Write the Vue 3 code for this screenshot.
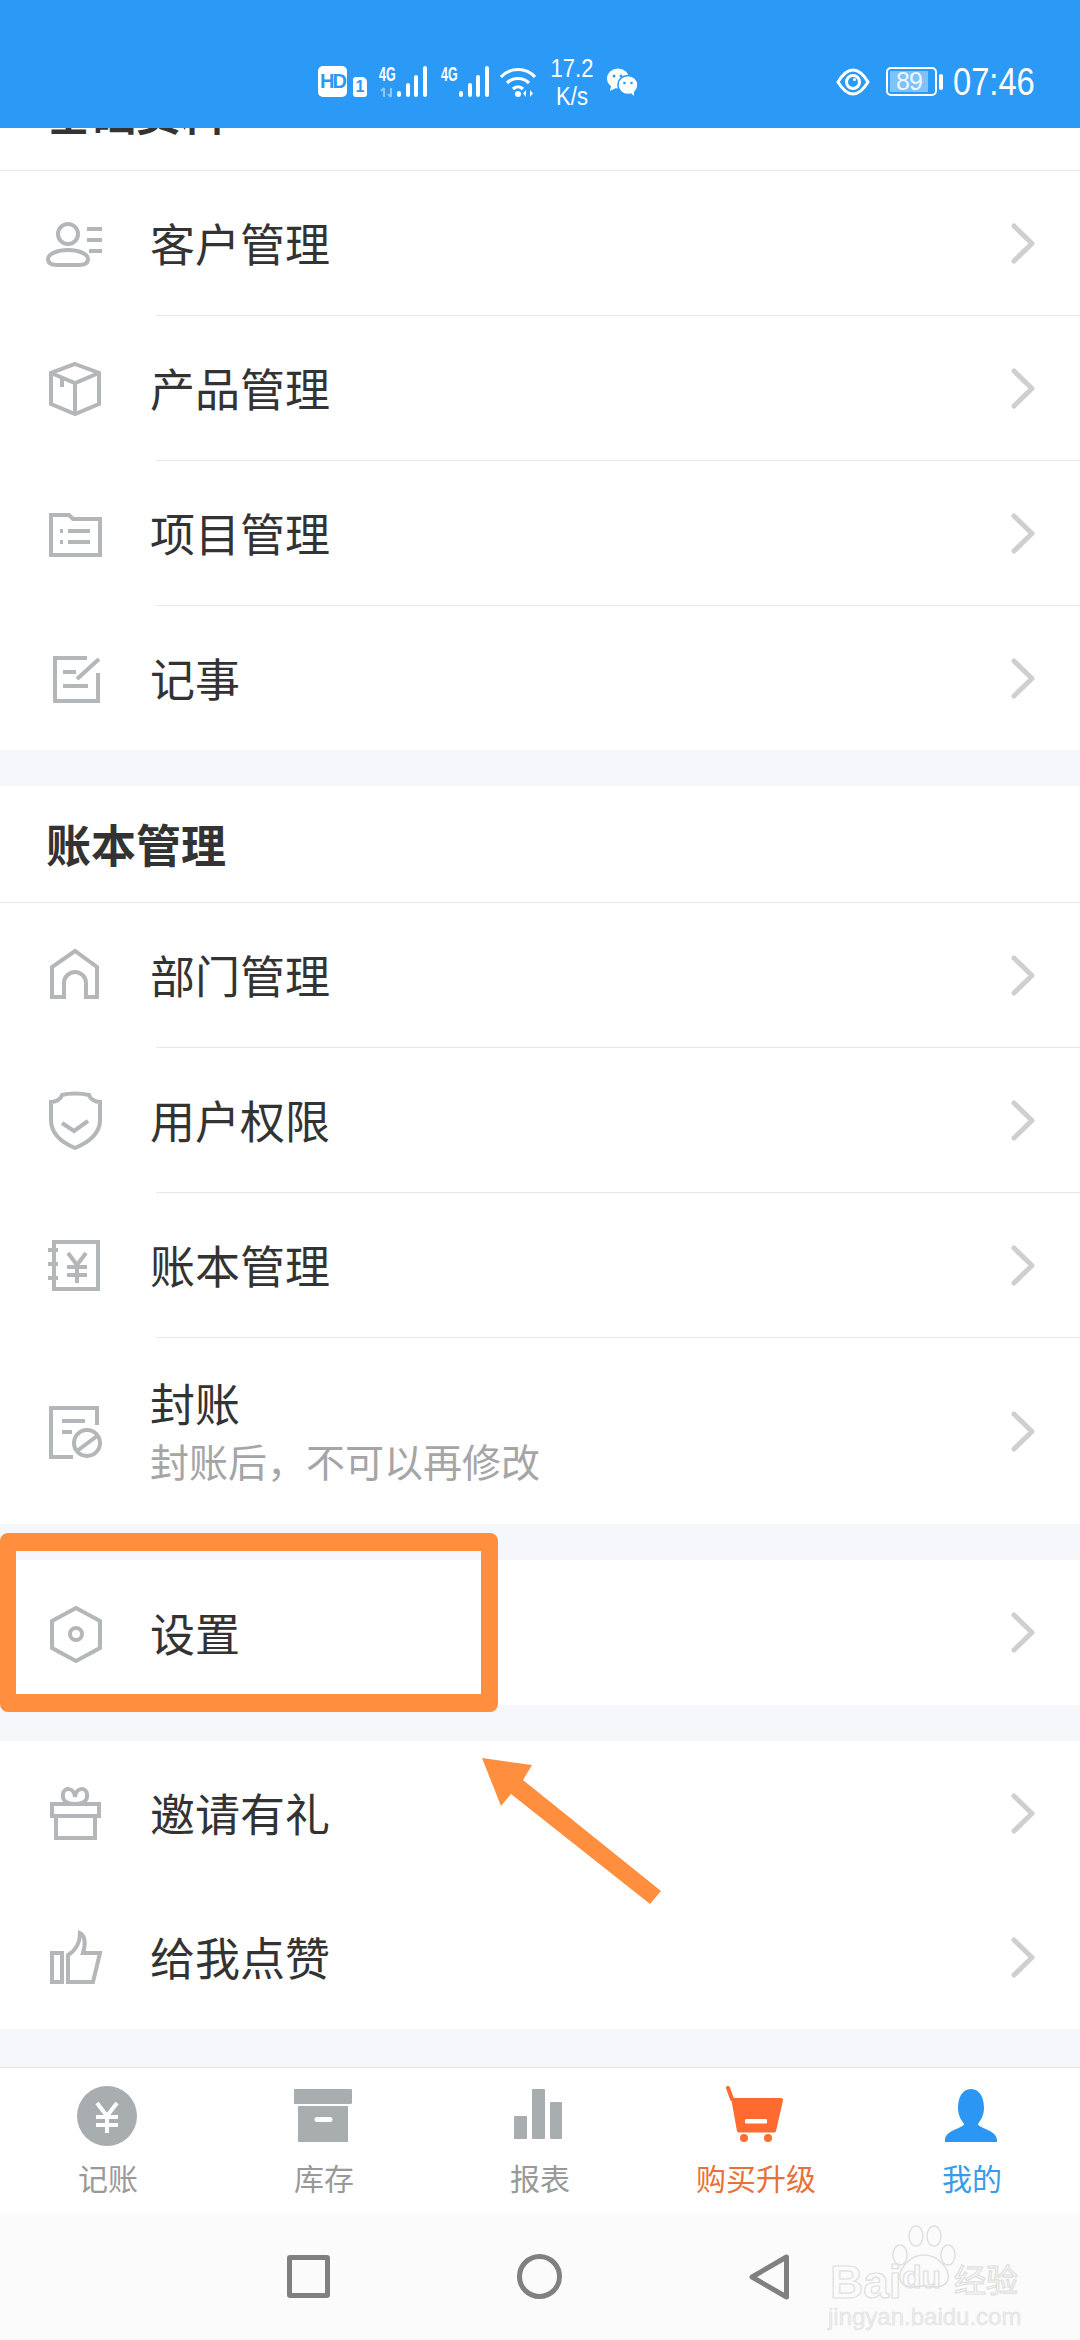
<template>
  <div class="page">
    <header class="status">
      <div class="status__left">
        <span class="status__hd">HD</span>
        <span class="status__sim">1</span>
        <div class="sig">
          <div class="sig__col">
            <span class="sig__net">4G</span>
            <svg class="sig__arrows" width="17" height="11" viewBox="0 0 17 11">
              <path d="M5 10V1M2 4l3-3M12 1v9M9 7l3 3" />
            </svg>
          </div>
          <svg class="sig__bars" width="32" height="32" viewBox="0 0 32 32">
            <path d="M3 27v2M12 19v10M20 11v18M29 2v27" />
          </svg>
        </div>
        <div class="sig sig_second">
          <div class="sig__col">
            <span class="sig__net">4G</span>
          </div>
          <svg class="sig__bars" width="32" height="32" viewBox="0 0 32 32">
            <path d="M3 27v2M12 19v10M20 11v18M29 2v27" />
          </svg>
        </div>
        <svg class="status__wifi" width="38" height="32" viewBox="0 0 38 32">
          <path d="M2 11C11 1 27 1 36 11M8 17c6-6 16-6 22 0M14 23c3-3 7-3 10 0" fill="none" stroke="#fff" stroke-width="3.2" />
          <circle cx="19" cy="28" r="3" fill="#fff" />
          <path d="M27 24v7l-3-3.500zM31 24v7l3-3.500z" fill="#fff" />
        </svg>
        <div class="status__speed">
          <span>17.2</span>
          <span>K/s</span>
        </div>
        <svg class="status__wechat" width="32" height="28" viewBox="0 0 32 28">
          <ellipse cx="12" cy="10.500" rx="11" ry="10" fill="#fff" />
          <path d="M5 18l-1 5 6-3z" fill="#fff" />
          <ellipse cx="22" cy="17" rx="10" ry="9.500" fill="#fff" stroke="#2b9af6" stroke-width="1.500" />
          <path d="M25 25l3 3v-5z" fill="#fff" />
          <circle cx="8" cy="8" r="1.500" fill="#2b9af6" />
          <circle cx="15" cy="8" r="1.500" fill="#2b9af6" />
          <circle cx="18.500" cy="15" r="1.300" fill="#2b9af6" />
          <circle cx="25.500" cy="15" r="1.300" fill="#2b9af6" />
        </svg>
      </div>
      <div class="status__right">
        <svg class="status__eye" width="34" height="28" viewBox="0 0 34 28">
          <path d="M2 14C8 4 13 2 17 2s9 2 15 12c-6 10-11 12-15 12S8 24 2 14z" fill="none" stroke="#fff" stroke-width="3" />
          <circle cx="17" cy="14" r="6.500" fill="none" stroke="#fff" stroke-width="3" />
          <circle cx="18.500" cy="11.500" r="1.500" fill="#fff" />
        </svg>
        <div class="status__battery"><span>89</span></div>
        <span class="status__cap"></span>
        <span class="status__time">07:46</span>
      </div>
    </header>

    <main class="scroll">
      <div class="scroll__inner">
        <section v-for="(group, g) in groups" :key="g" class="card">
          <h2 v-if="group.title" class="card__title">{{ group.title }}</h2>
          <template v-for="(item, i) in group.items" :key="item.label">
            <div v-if="i > 0 && !group.noLines" class="card__sep"></div>
            <div class="row" :class="item.rowClass">
              <svg class="row__icon" width="60" height="60" viewBox="0 0 60 60">
                <path :d="item.d" />
              </svg>
              <div class="row__text">
                <div class="row__label">{{ item.label }}</div>
                <div v-if="item.sub" class="row__sub">{{ item.sub }}</div>
              </div>
              <svg class="row__chevron" width="26" height="41" viewBox="0 0 26 41">
                <path d="M4 3l18 17.500L4 38" />
              </svg>
            </div>
          </template>
        </section>
      </div>
    </main>

    <nav class="tabs">
      <div class="tab">
        <svg width="80" height="60" viewBox="0 0 80 60">
          <circle cx="39" cy="30" r="30" fill="#a8adb0" />
          <path d="M29 17l10 13 10-13M28 31h22M28 39h22M39 30v17" fill="none" stroke="#fff" stroke-width="4" />
        </svg>
        <span class="tab__label">记账</span>
      </div>
      <div class="tab">
        <svg width="80" height="60" viewBox="0 0 80 60">
          <rect x="10" y="3" width="58" height="15" rx="1" fill="#a8adb0" />
          <path d="M14 20h50v36H14zM33 31a2 2 0 0 0 0 5h13a2 2 0 0 0 0-5z" fill="#a8adb0" fill-rule="evenodd" />
        </svg>
        <span class="tab__label">库存</span>
      </div>
      <div class="tab">
        <svg width="80" height="60" viewBox="0 0 80 60">
          <rect x="14" y="30" width="13" height="23" rx="1" fill="#a8adb0" />
          <rect x="32" y="3" width="13" height="50" rx="1" fill="#a8adb0" />
          <rect x="50" y="16" width="12" height="37" rx="1" fill="#a8adb0" />
        </svg>
        <span class="tab__label">报表</span>
      </div>
      <div class="tab tab_buy">
        <svg width="80" height="60" viewBox="0 0 80 60">
          <path d="M12 2l4 11" stroke="#ff6a30" stroke-width="4" stroke-linecap="round" />
          <path d="M15 12h50a2 2 0 0 1 2 2.500L60 45a2 2 0 0 1-2 1.500H23a2 2 0 0 1-2-1.500z" fill="#ff6a30" />
          <rect x="29" y="33" width="22" height="4.500" rx="1" fill="#fff" />
          <circle cx="28" cy="52" r="4" fill="#ff6a30" />
          <circle cx="52" cy="52" r="4" fill="#ff6a30" />
        </svg>
        <span class="tab__label">购买升级</span>
      </div>
      <div class="tab tab_me">
        <svg width="80" height="60" viewBox="0 0 80 60">
          <path d="M39 3c9 0 13 9 13 19 0 8-4 13-6 16 0 4 19 6 19 16v2H13v-2c0-10 19-12 19-16-2-3-6-8-6-16C26 12 30 3 39 3z" fill="#2b96f3" />
        </svg>
        <span class="tab__label">我的</span>
      </div>
    </nav>

    <footer class="sysnav">
      <span class="sysnav__square"></span>
      <span class="sysnav__circle"></span>
      <svg width="40" height="46" viewBox="0 0 40 46">
        <path d="M37.500 3v40L3 23z" fill="none" stroke="#808080" stroke-width="5" stroke-linejoin="round" />
      </svg>
      <div class="mark">
        <svg class="mark__paw" width="70" height="66" viewBox="0 0 70 66">
          <g fill="none" stroke="#e0e0e0" stroke-width="1.500">
            <ellipse cx="10" cy="30" rx="7" ry="10" />
            <ellipse cx="26" cy="11" rx="7" ry="10" />
            <ellipse cx="44" cy="11" rx="7" ry="10" />
            <ellipse cx="58" cy="30" rx="7" ry="10" />
            <path d="M34 30c14 0 26 14 24 24-2 10-16 8-24 7-8 1-22 3-24-7-2-10 10-24 24-24z" />
          </g>
        </svg>
        <span class="mark__bai">Bai</span>
        <span class="mark__du">du</span>
        <span class="mark__cn">经验</span>
        <span class="mark__url">jingyan.baidu.com</span>
      </div>
    </footer>

    <div class="highlight"></div>
    <svg class="pointer" width="190" height="155" viewBox="0 0 190 155">
      <path d="M1 1l50 7-9 15 138 111-11 13L30 37 20 49z" fill="#ff8f3e" />
    </svg>
  </div>
</template>

<script setup>
const circle = (cx, cy, r) =>
  `M${cx - r} ${cy}a${r} ${r} 0 1 0 ${2 * r} 0a${r} ${r} 0 1 0 ${-2 * r} 0`;

const groups = [
  {
    title: "基础资料",
    items: [
      {
        label: "客户管理",
        d: `${circle(23, 21, 10)}M3 46c0-5 9-9 20-9s20 4 20 9c0 5-4 6-9 6H12c-5 0-9-1-9-6zM42 16h15M42 27h15M44 38h13`,
      },
      {
        label: "产品管理",
        d: "M30 6l24 9v31l-24 10-24-10V15zM6 15l24 10 24-10M30 25v31M17 20v9",
      },
      {
        label: "项目管理",
        d: "M6 12h18l4 4h27v36H6zM15 28h3M15 39h3M23 28h22M23 39h22",
      },
      {
        label: "记事",
        d: "M42 10H10v43h43V25M54 11L32 31M18 24h13M18 38h25",
      },
    ],
  },
  {
    title: "账本管理",
    items: [
      {
        label: "部门管理",
        d: "M7 52V22L30 6l22 16v30H41V38a11 11 0 0 0-22 0v14z",
      },
      {
        label: "用户权限",
        d: "M17 5C24 3 36 3 44 5 45 9 50 12 55 12V30C55 44 42 53 30 58 18 53 6 44 6 30V12C11 12 16 9 17 5zM17 33l12 8 14-10",
      },
      {
        label: "账本管理",
        d: "M9 7h44v47H9zM3 15h10M3 29h10M3 43h10M23 18l9 12 9-12M22 32h20M22 40h20M32 30v18",
      },
      {
        label: "封账",
        sub: "封账后，不可以再修改",
        rowClass: "row_tall",
        d: `M52 24V7H6v49h22M17 20h23M17 31h10${circle(42, 42, 13)}M32 50l20-15`,
      },
    ],
  },
  {
    items: [
      {
        label: "设置",
        rowClass: "row_wide",
        d: `M31 5l24 13v27L31 58 7 45V18z${circle(31, 31, 6)}`,
      },
    ],
  },
  {
    items: [
      {
        label: "邀请有礼",
        d: "M7 21h47v12H7zM11 33v22h39V33M30 21c-8 0-13-3-12-10 1-7 11-7 12 3 1-10 11-10 12-3 1 7-4 10-12 10z",
      },
      {
        label: "给我点赞",
        d: "M7 26h10v29H7zM23 55V28c7-4 12-12 12-22 5 2 6 11 3 20h17l-7 29z",
      },
    ],
    noLines: true,
  },
];
</script>

<style>
body {
  margin: 0;
  background: #fff;
}
</style>

<style scoped>
.page {
  position: relative;
  width: 1080px;
  height: 2340px;
  overflow: hidden;
  display: flex;
  flex-direction: column;
  background: #f5f7fa;
  font-family: "Noto Sans CJK SC", "Liberation Sans", sans-serif;
  color: #333;
}

.status {
  flex: none;
  box-sizing: border-box;
  height: 128px;
  padding: 35px 46px 0 318px;
  display: flex;
  align-items: center;
  justify-content: space-between;
  background: #2b9af6;
  color: #fff;
  font-family: "Liberation Sans", sans-serif;
  z-index: 1;
}

.status__left,
.status__right {
  display: flex;
  align-items: center;
}

.status__hd {
  width: 29px;
  height: 31px;
  border-radius: 5px;
  background: #fff;
  color: #2b9af6;
  font-size: 20px;
  font-weight: 700;
  letter-spacing: -2px;
  line-height: 31px;
  text-align: center;
}

.status__sim {
  width: 14px;
  height: 20px;
  margin: 10px 0 0 6px;
  border-radius: 3px 5px 3px 3px;
  background: #fff;
  color: #2b9af6;
  font-size: 16px;
  font-weight: 700;
  line-height: 20px;
  text-align: center;
}

.sig {
  display: flex;
  height: 32px;
  margin-left: 12px;
}

.sig_second {
  margin-left: 13px;
}

.sig__col {
  width: 17px;
  height: 32px;
  display: flex;
  flex-direction: column;
  justify-content: space-between;
}

.sig__net {
  font-size: 20px;
  font-weight: 700;
  line-height: 16px;
  white-space: nowrap;
  transform: scaleX(0.62);
  transform-origin: left;
}

.sig__arrows {
  fill: none;
  stroke: #8cc8fa;
  stroke-width: 2;
}

.sig__bars {
  fill: none;
  stroke: #fff;
  stroke-width: 4;
  stroke-linecap: round;
}

.status__wifi {
  margin-left: 9px;
}

.status__speed {
  width: 42px;
  margin-left: 14px;
  display: flex;
  flex-direction: column;
  align-items: center;
  font-size: 25px;
  line-height: 28px;
  transform: scaleX(0.88);
}

.status__wechat {
  margin-left: 13px;
}

.status__battery {
  width: 51px;
  height: 29px;
  margin-left: 16px;
  box-sizing: border-box;
  padding: 2px;
  border: 2px solid #fff;
  border-radius: 5px;
}

.status__battery span {
  display: block;
  width: 38px;
  height: 21px;
  background: rgba(255, 255, 255, 0.4);
  color: rgba(255, 255, 255, 0.9);
  font-size: 25px;
  letter-spacing: -1px;
  line-height: 21px;
  text-align: center;
}

.status__cap {
  width: 4px;
  height: 16px;
  margin-left: 2px;
  border-radius: 2px;
  background: #fff;
}

.status__time {
  width: 81px;
  margin-left: 10px;
  font-size: 38px;
  line-height: 38px;
  white-space: nowrap;
  transform: scaleX(0.86);
  transform-origin: left;
}

.scroll {
  flex: 1;
  min-height: 0;
  overflow: hidden;
}

.scroll__inner {
  margin-top: -74px;
}

.card {
  margin-bottom: 36px;
  background: #fff;
}

.card__title {
  box-sizing: border-box;
  height: 117px;
  margin: 0;
  padding-left: 46px;
  border-bottom: 1px solid #e8e8e8;
  font-size: 45px;
  font-weight: 700;
  line-height: 115px;
}

.card__sep {
  height: 1px;
  margin-left: 156px;
  background: #e8e8e8;
}

.row {
  height: 144px;
  padding-left: 45px;
  display: flex;
  align-items: center;
}

.row_tall {
  height: 186px;
}

.row_wide {
  height: 145px;
}

.row__icon {
  flex: none;
  fill: none;
  stroke: #b3b7ba;
  stroke-width: 4;
}

.row__text {
  flex: 1;
  margin-left: 45px;
}

.row__label {
  font-size: 45px;
  line-height: 56px;
}

.row__sub {
  margin-top: 1px;
  color: #a5a5a5;
  font-size: 39px;
  line-height: 56px;
}

.row__chevron {
  flex: none;
  margin-right: 44px;
  fill: none;
  stroke: #cfcfcf;
  stroke-width: 5;
  stroke-linecap: round;
  stroke-linejoin: round;
}

.tabs {
  flex: none;
  box-sizing: border-box;
  height: 146px;
  padding-top: 18px;
  display: grid;
  grid-template-columns: repeat(5, 1fr);
  border-top: 1px solid #e4e4e4;
  background: #fff;
}

.tab {
  display: flex;
  flex-direction: column;
  align-items: center;
}

.tab__label {
  margin-top: 13px;
  color: #999;
  font-size: 30px;
  line-height: 36px;
}

.tab_buy .tab__label {
  color: #e8703a;
}

.tab_me .tab__label {
  color: #3a9be8;
}

.sysnav {
  flex: none;
  position: relative;
  box-sizing: border-box;
  height: 127px;
  padding-right: 4px;
  display: flex;
  align-items: center;
  justify-content: center;
  gap: 187px;
  background: #fbfbfb;
}

.sysnav__square {
  box-sizing: border-box;
  width: 43px;
  height: 43px;
  border: 5px solid #808080;
  border-radius: 3px;
}

.sysnav__circle {
  box-sizing: border-box;
  width: 45px;
  height: 45px;
  border: 5px solid #808080;
  border-radius: 50%;
}

.mark {
  position: absolute;
  left: 828px;
  top: 12px;
  width: 200px;
  height: 106px;
  font-family: "Liberation Sans", sans-serif;
  color: transparent;
  -webkit-text-stroke: 1.2px #e0e0e0;
}

.mark__paw {
  position: absolute;
  left: 62px;
  top: 0;
}

.mark__bai {
  position: absolute;
  left: 2px;
  top: 30px;
  font-size: 46px;
  font-weight: 700;
}

.mark__du {
  position: absolute;
  left: 74px;
  top: 34px;
  font-size: 32px;
  font-weight: 700;
}

.mark__cn {
  position: absolute;
  left: 126px;
  top: 30px;
  font-family: "Noto Sans CJK SC", sans-serif;
  font-size: 32px;
  line-height: 46px;
}

.mark__url {
  position: absolute;
  left: 0;
  top: 78px;
  color: #ececec;
  font-size: 24px;
  -webkit-text-stroke: 0.5px #e0e0e0;
  white-space: nowrap;
}

.highlight {
  position: absolute;
  left: 0;
  top: 1533px;
  box-sizing: border-box;
  width: 498px;
  height: 179px;
  border: solid #ff8f3e;
  border-width: 18px 17px 18px 16px;
  border-radius: 8px;
}

.pointer {
  position: absolute;
  left: 481px;
  top: 1757px;
}
</style>
